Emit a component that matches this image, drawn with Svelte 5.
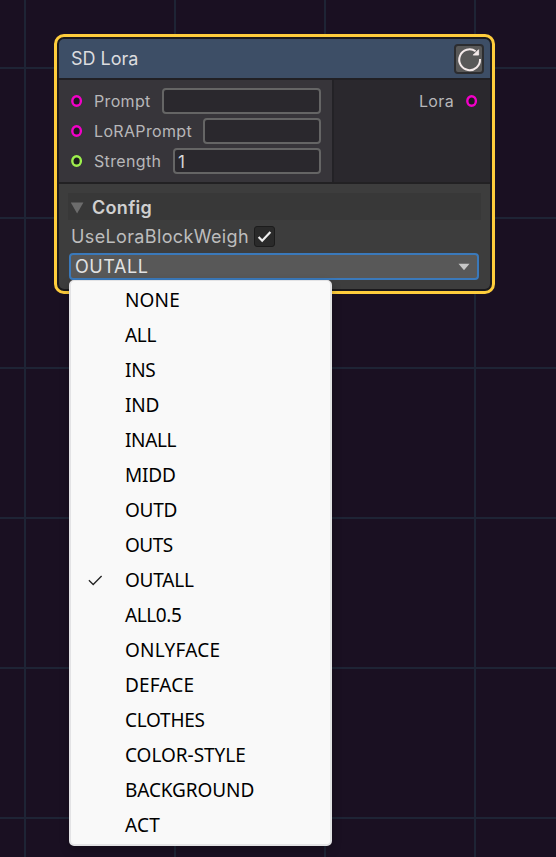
<script>
  const inputs = [
    { name: 'Prompt', value: '', color: '#f200c8', width: 159 },
    { name: 'LoRAPrompt', value: '', color: '#f200c8', width: 118 },
    { name: 'Strength', value: '1', color: '#9cf04c', width: 148 }
  ];
  const options = [
    { text: 'NONE', track: 0.15 },
    { text: 'ALL', track: -0.35 },
    { text: 'INS', track: -0.3 },
    { text: 'IND', track: -0.25 },
    { text: 'INALL', track: -0.35 },
    { text: 'MIDD', track: -0.15 },
    { text: 'OUTD', track: -0.25 },
    { text: 'OUTS', track: -0.5 },
    { text: 'OUTALL', track: -0.22 },
    { text: 'ALL0.5', track: -0.4 },
    { text: 'ONLYFACE', track: 0.25 },
    { text: 'DEFACE', track: 0.15 },
    { text: 'CLOTHES', track: -0.25 },
    { text: 'COLOR-STYLE', track: -0.03 },
    { text: 'BACKGROUND', track: -0.1 },
    { text: 'ACT', track: 0.2 }
  ];
  let selected = $state('OUTALL');
  let checked = $state(true);
</script>

{#snippet port(color)}
  <svg class="port" width="12" height="12" viewBox="0 0 12 12">
    <ellipse cx="5.6" cy="6" rx="4.3" ry="4.7" fill="#1d1c1f" stroke={color} stroke-width="2.4" />
  </svg>
{/snippet}

<main class="canvas">
  <section class="node">
    <div class="inner">
      <header>
        <span class="title">SD Lora</span>
        <button class="refresh" aria-label="Refresh">
          <svg width="26" height="26" viewBox="0 0 26 26">
            <path d="M24 13A10.4 10.4 0 1 1 19.6 5.2" fill="none" stroke="#f4eaea" stroke-width="2" />
            <path d="M22.6 3.7v5.4h-5.4z" fill="#f4eaea" stroke="#f4eaea" stroke-width=".8" />
          </svg>
        </button>
      </header>
      <div class="ports">
        <div class="ins">
          {#each inputs as p}
            <div class="row">
              {@render port(p.color)}
              <span class="label">{p.name}</span>
              <div class="field" style="width:{p.width}px">{p.value}</div>
            </div>
          {/each}
        </div>
        <div class="outs">
          <div class="row">
            <span class="label">Lora</span>
            {@render port('#f200c8')}
          </div>
        </div>
      </div>
      <div class="config">
        <div class="fold">
          <svg width="14" height="12" viewBox="0 0 14 12"><path d="M.8.5h12.6L7.1 11.6z" fill="#6c6c6c" /></svg>
          <b>Config</b>
        </div>
        <div class="toggle">
          <span>UseLoraBlockWeigh</span>
          <button class="box" aria-label="UseLoraBlockWeigh" onclick={() => (checked = !checked)}>
            {#if checked}
              <svg width="21" height="21" viewBox="0 0 21 21"><path d="M4.6 11l3.6 3.7 8.2-8.6" fill="none" stroke="#eee" stroke-width="2.2" /></svg>
            {/if}
          </button>
        </div>
        <div class="select">
          <span>{selected}</span>
          <svg width="12" height="8" viewBox="0 0 12 8"><path d="M.5.7h11L6 7.2z" fill="#c6c6c6" /></svg>
        </div>
      </div>
    </div>
  </section>

  <div class="menu">
    {#each options as o}
      <button class="item" onclick={() => (selected = o.text)}>
        <span class="tick">
          {#if o.text === selected}
            <svg width="15" height="11" viewBox="0 0 15 11"><path d="M.9 5.3l4.3 4.2L13.6 1" fill="none" stroke="#222" stroke-width="1.3" /></svg>
          {/if}
        </span>
        <span style="letter-spacing:{o.track}px">{o.text}</span>
      </button>
    {/each}
  </div>
</main>

<style>
  :global(body) { margin: 0; }
  .canvas {
    position: relative;
    width: 556px;
    height: 857px;
    overflow: hidden;
    box-sizing: border-box;
    padding: 34px 0 0 54px;
    background:
      linear-gradient(90deg, #1e2435 2px, transparent 2px) 24px 0 / 150px 150px,
      linear-gradient(#1e2435 2px, transparent 2px) 0 67px / 150px 150px,
      #1a1022;
    font-family: Inter, sans-serif;
    font-weight: 370;
  }
  button { border: 0; margin: 0; padding: 0; font: inherit; background: none; }
  svg { display: block; }
  .node {
    box-sizing: border-box;
    width: 441px;
    height: 260px;
    border: 3px solid #ffcd3c;
    border-radius: 10px;
    background: #1b1a1d;
    padding: 2px;
  }
  .inner { height: 250px; border-radius: 5px; overflow: hidden; display: flex; flex-direction: column; }
  header {
    height: 39px;
    display: flex;
    align-items: center;
    justify-content: space-between;
    padding: 0 6px 0 12px;
    background: #3d4e66;
    border-bottom: 2px solid #212024;
  }
  .title { font-size: 18px; letter-spacing: 0; color: #dcdcdf; }
  .refresh {
    width: 30px;
    height: 30px;
    box-sizing: border-box;
    border: 2px solid #2c2d30;
    border-radius: 4px;
    background: #585858;
  }
  .ports { display: flex; height: 102px; border-bottom: 2px solid #222123; }
  .ins { width: 273px; background: #37353a; border-right: 2px solid #232226; padding-top: 6px; }
  .outs { flex: 1; background: #2a282d; padding-top: 6px; }
  .row { display: flex; align-items: center; height: 30px; padding: 0 11px 0 12px; }
  .outs .row { justify-content: flex-end; padding-right: 12px; }
  .port { flex: none; }
  .label { font-size: 16px; letter-spacing: 0.34px; color: #b7b7b9; margin-left: 11px; }
  .outs .label { margin-right: 12px; }
  .field {
    box-sizing: border-box;
    height: 26px;
    margin-left: auto;
    border: 2px solid #656565;
    border-radius: 4px;
    background: #2a282d;
    color: #d8d8d8;
    font-size: 17px;
    line-height: 24px;
    padding-left: 3px;
  }
  .config { flex: 1; background: #3d3d3d; padding: 9px 0 0 9px; }
  .fold { box-sizing: border-box; display: flex; align-items: center; width: 413px; height: 27px; padding-top: 2px; background: #383838; color: #d0d0d0; font-size: 18px; }
  .fold svg { margin: 0 8px 0 2px; }
  .fold b { font-weight: 600; letter-spacing: 0.3px; }
  .toggle { display: flex; align-items: center; height: 33px; padding-left: 3px; font-size: 18px; letter-spacing: 0.37px; color: #bdbdbd; }
  .box { width: 21px; height: 21px; box-sizing: border-box; margin-left: 5px; border: 1px solid #1c1c1c; border-radius: 3px; background: #2a2a2a; }
  .box svg { margin: -1px; }
  .select {
    box-sizing: border-box;
    display: flex;
    align-items: center;
    justify-content: space-between;
    width: 410px;
    height: 27px;
    margin-left: 1px;
    border: 2px solid #3a79bb;
    border-radius: 4px;
    background: #585858;
    padding: 0 7px 0 4px;
    color: #e2e2e2;
    font-size: 18px;
    letter-spacing: 0.6px;
  }
  .menu {
    position: absolute;
    left: 69px;
    top: 280px;
    width: 263px;
    height: 566px;
    box-sizing: border-box;
    border: 2px solid #e3e3e5;
    border-top-width: 1px;
    border-radius: 5px;
    background: #f9f9f9;
    padding-top: 2px;
    box-shadow: 0 4px 10px rgba(0, 0, 0, 0.25);
  }
  .item {
    display: flex;
    align-items: center;
    width: 100%;
    height: 35px;
    color: #000;
    font: 385 19px/35px 'Noto Sans', sans-serif;
  }
  .tick { width: 37px; padding-left: 17px; }
</style>
